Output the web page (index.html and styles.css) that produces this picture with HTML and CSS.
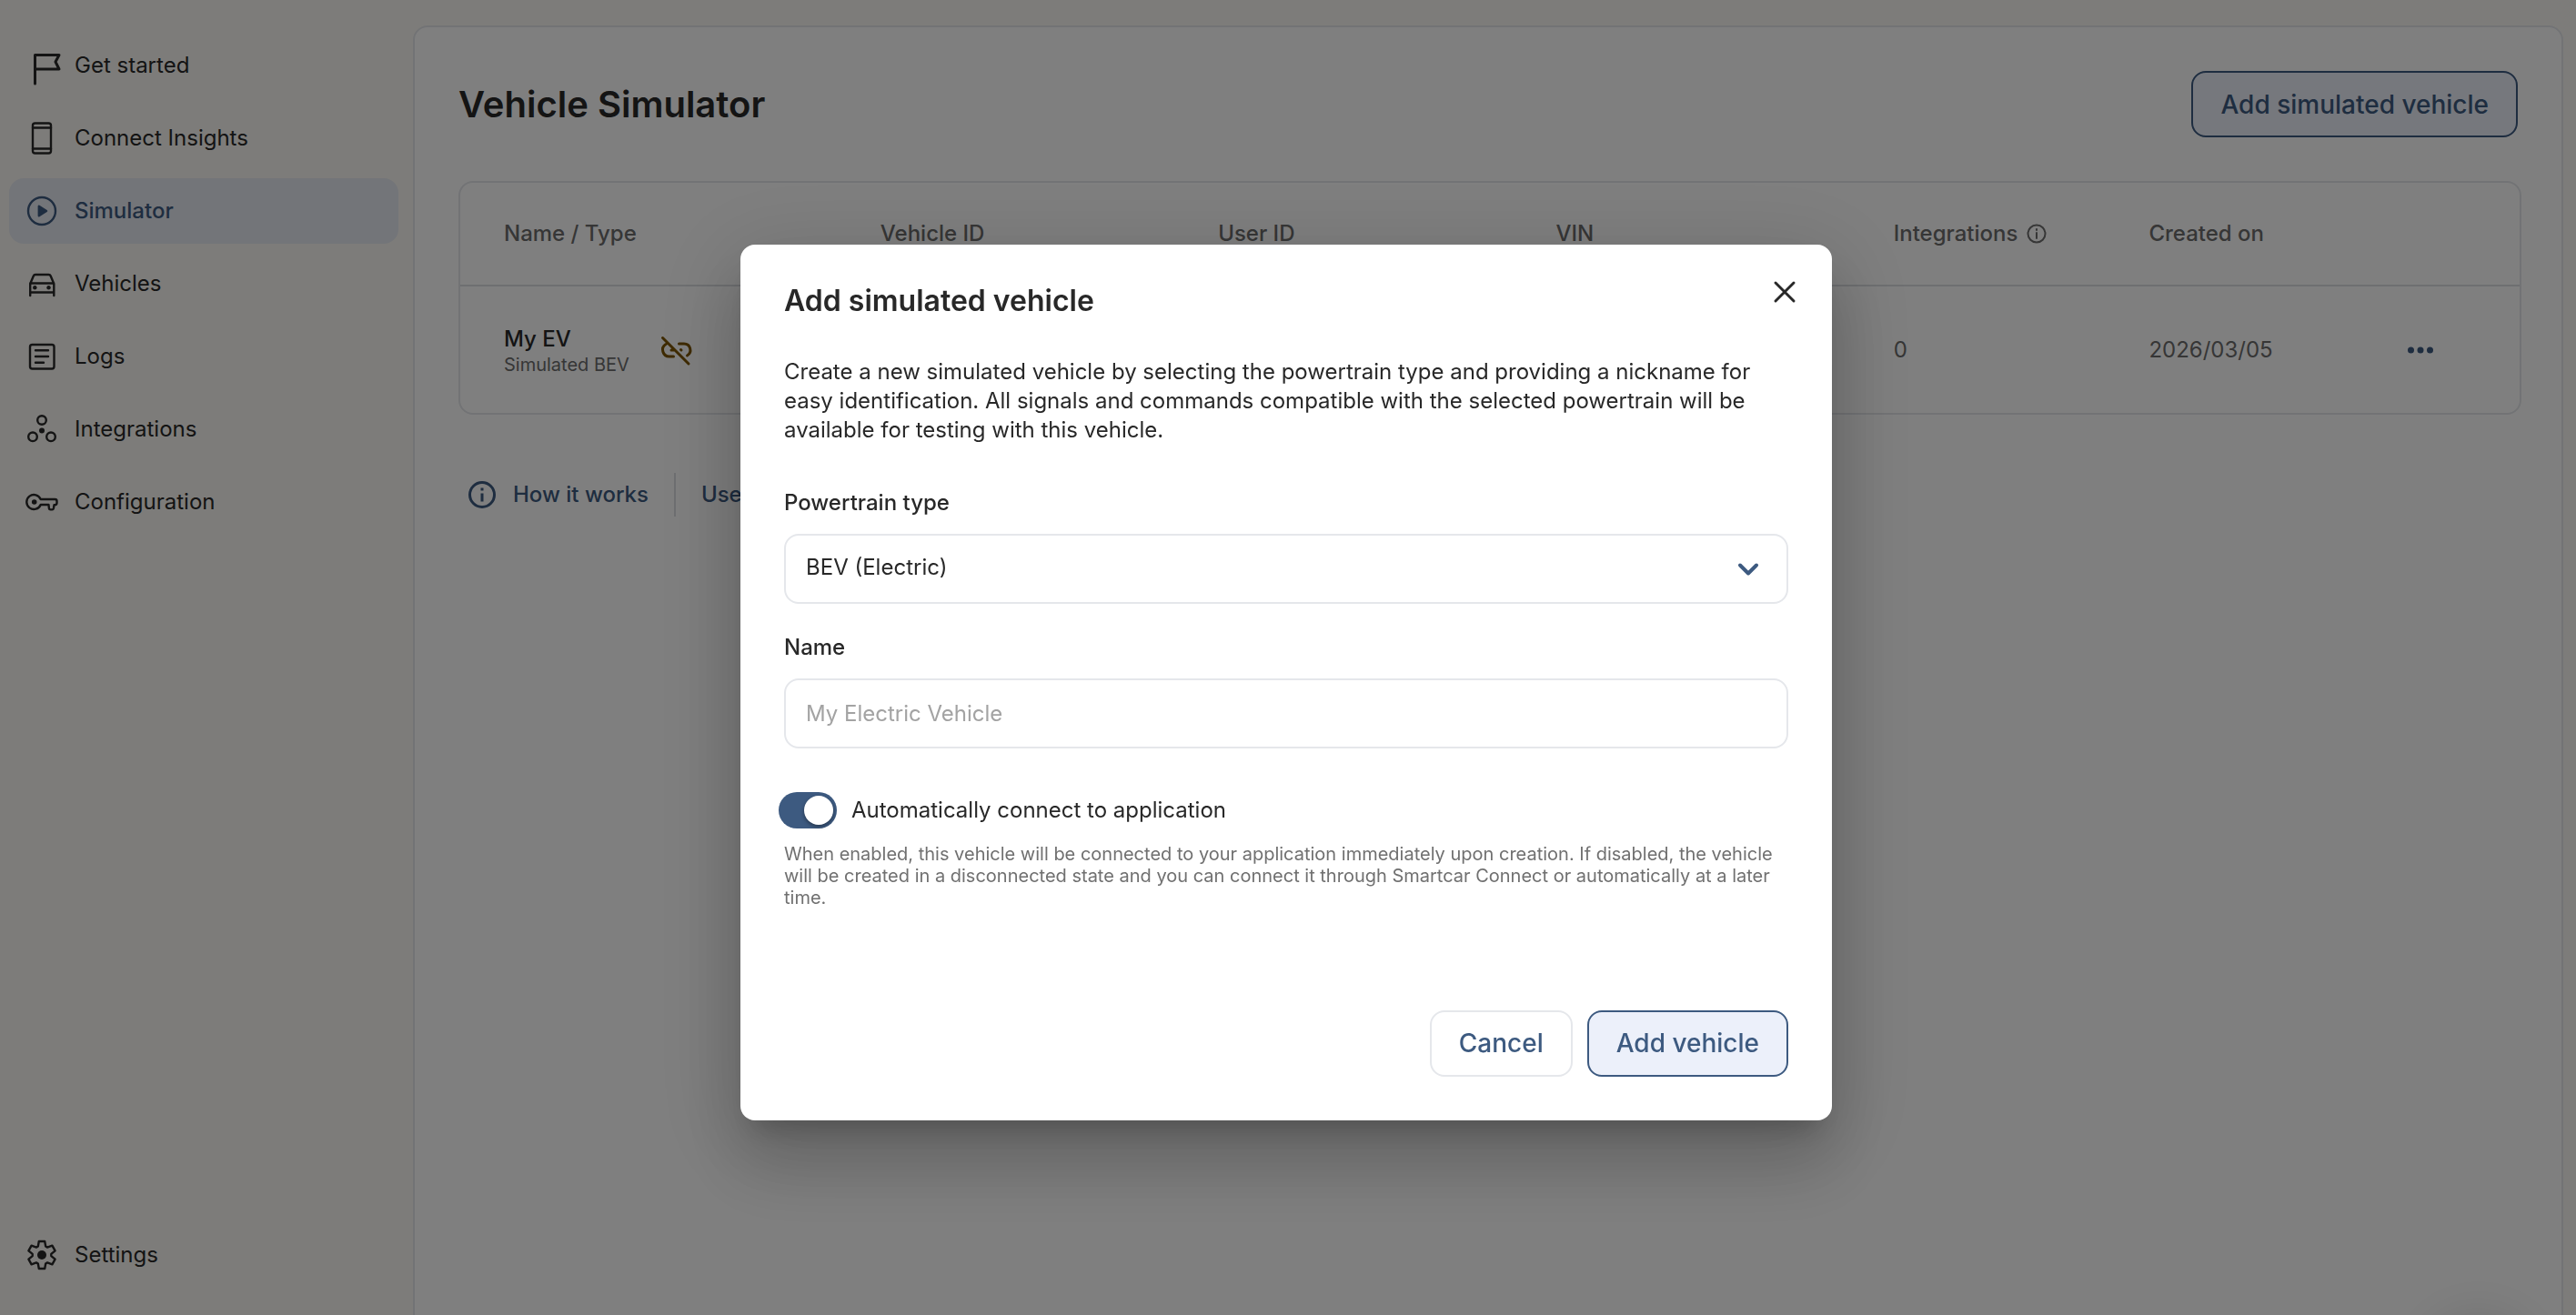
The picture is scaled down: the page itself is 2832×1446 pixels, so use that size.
FILE: index.html
```html
<!DOCTYPE html>
<html lang="en">
<head>
    <meta charset="UTF-8">
    <meta name="viewport" content="width=device-width, initial-scale=1.0">
    <title>Vehicle Simulator</title>
    <link rel="stylesheet" href="styles.css">
</head>
<body>
    <div class="app">
        <nav class="sidebar">
            <a class="nav-item" href="#">
                <svg class="icon icon-bold" viewBox="0 0 36 36"><path d="M10.500 38V6.500H37L33 14l4 8H10.500"/></svg>
                Get started
            </a>
            <a class="nav-item" href="#">
                <svg class="icon" viewBox="0 0 36 36"><rect x="8" y="1.500" width="20" height="33" rx="2.500"/><path d="M8 6.500h20M8 29.500h20"/></svg>
                Connect Insights
            </a>
            <a class="nav-item active" href="#">
                <svg class="icon" viewBox="0 0 36 36"><circle cx="18" cy="18" r="15"/><path class="solid" d="M14.800 12.800v10.400L23 18z"/></svg>
                Simulator
            </a>
            <a class="nav-item" href="#">
                <svg class="icon" viewBox="0 0 36 36"><path d="M5.200 31V18L8.800 9.500Q9.400 8 11 8h14.500q1.600 0 2.200 1.500L31.300 18v13M5.200 17.500h26M5.200 27.500h26"/><circle class="dot" cx="10.300" cy="22.300" r="2.200"/><circle class="dot" cx="25.500" cy="22.300" r="2.200"/></svg>
                Vehicles
            </a>
            <a class="nav-item" href="#">
                <svg class="icon" viewBox="0 0 36 36"><rect x="5" y="5" width="26.500" height="26.500" rx="2.500"/><path d="M11 11.200h14M11 18h14M11 24.800h9"/></svg>
                Logs
            </a>
            <a class="nav-item" href="#">
                <svg class="icon" viewBox="0 0 36 36"><circle cx="18" cy="8" r="4.800"/><circle cx="8" cy="26.300" r="4.800"/><circle cx="28" cy="26.300" r="4.800"/><circle class="dot" cx="18" cy="19.500" r="3"/></svg>
                Integrations
            </a>
            <a class="nav-item" href="#">
                <svg class="icon" viewBox="0 0 36 36"><path d="M16.700 15H32.500q2 0 2 2v2q0 2-2 2.200h-1l-.6 3.800q-.3 1.400-1.600 1.400h-1.800q-1.400 0-1.600-1.400L25.500 21h-8.800a8 8 0 1 1 0-6z"/><circle class="dot" cx="9.700" cy="18" r="2.800"/></svg>
                Configuration
            </a>
            <a class="nav-item nav-settings" href="#">
                <svg class="icon" viewBox="0 0 36 36"><path d="M13.800 8.500 14.800 3h6.400l1 5.500 1.900 1.100 5.300-1.900 3.200 5.600-4.300 3.600v2.200l4.300 3.600-3.200 5.600-5.300-1.900-1.900 1.100-1 5.500h-6.400l-1-5.500-1.900-1.100-5.300 1.900-3.200-5.600 4.300-3.600v-2.200l-4.300-3.600 3.200-5.600 5.300 1.900z"/><circle class="dot" cx="18" cy="18" r="5"/></svg>
                Settings
            </a>
        </nav>

        <main class="panel">
            <header class="panel-header">
                <h1>Vehicle Simulator</h1>
                <button class="btn btn-primary" type="button">Add simulated vehicle</button>
            </header>

            <div class="table-card">
                <table>
                    <colgroup>
                        <col class="col-name">
                        <col class="col-id">
                        <col class="col-id">
                        <col class="col-id">
                        <col class="col-meta">
                        <col class="col-meta">
                        <col>
                    </colgroup>
                    <thead>
                        <tr>
                            <th>Name / Type</th>
                            <th>Vehicle ID</th>
                            <th>User ID</th>
                            <th>VIN</th>
                            <th>
                                <span class="th-info">Integrations
                                    <svg class="icon-small" viewBox="0 0 22 22"><circle cx="11" cy="11" r="9.500"/><path d="M11 10v6M11 6v1"/></svg>
                                </span>
                            </th>
                            <th>Created on</th>
                            <th></th>
                        </tr>
                    </thead>
                    <tbody>
                        <tr>
                            <td>
                                <div class="vehicle">
                                    <div>
                                        <div class="vehicle-name">My EV</div>
                                        <div class="vehicle-type">Simulated BEV</div>
                                    </div>
                                    <svg class="icon icon-bold unlinked" viewBox="0 0 36 36"><path d="M2.500 4.500 31 33M14.500 25H10A7.300 7.300 0 0 1 6 11.500M20.500 11H26a7 7 0 0 1 3.500 13M12 18h3.500M22.500 17.500l.5.500"/></svg>
                                </div>
                            </td>
                            <td></td>
                            <td></td>
                            <td></td>
                            <td>0</td>
                            <td>2026/03/05</td>
                            <td>
                                <button class="more" type="button" aria-label="More">
                                    <svg class="icon" viewBox="0 0 36 36"><circle class="dot" cx="7.500" cy="18" r="3.500"/><circle class="dot" cx="18" cy="18" r="3.500"/><circle class="dot" cx="28.500" cy="18" r="3.500"/></svg>
                                </button>
                            </td>
                        </tr>
                    </tbody>
                </table>
            </div>

            <div class="help-links">
                <a href="#">
                    <svg class="icon icon-bold" viewBox="0 0 36 36"><circle cx="18" cy="18" r="13.500"/><path d="M18 16.500v9M18 10.500v3" stroke-linecap="butt"/></svg>
                    How it works
                </a>
                <a href="#">Use</a>
            </div>
        </main>
    </div>

    <div class="chat-launcher"></div>

    <div class="overlay">
        <form class="modal" role="dialog" aria-labelledby="modalTitle">
            <div class="modal-header">
                <h2 id="modalTitle">Add simulated vehicle</h2>
                <button class="close" type="button" aria-label="Close">
                    <svg viewBox="0 0 24 24"><path d="M2 2l20 20M22 2L2 22"/></svg>
                </button>
            </div>
            <p class="modal-text">Create a new simulated vehicle by selecting the powertrain type and providing a nickname for easy identification. All signals and commands compatible with the selected powertrain will be available for testing with this vehicle.</p>

            <div class="fields">
                <div class="field">
                    <label for="powertrain">Powertrain type</label>
                    <div class="select-wrap">
                        <select id="powertrain">
                            <option>BEV (Electric)</option>
                        </select>
                        <svg class="chevron" viewBox="0 0 24 24"><path d="M3 7.500l9 9 9-9"/></svg>
                    </div>
                </div>
                <div class="field">
                    <label for="name">Name</label>
                    <input id="name" type="text" placeholder="My Electric Vehicle">
                </div>
            </div>

            <div class="switch-row">
                <input class="switch" id="autoConnect" type="checkbox" checked>
                <label for="autoConnect">Automatically connect to application</label>
            </div>
            <p class="hint">When enabled, this vehicle will be connected to your application immediately upon creation. If disabled, the vehicle will be created in a disconnected state and you can connect it through Smartcar Connect or automatically at a later time.</p>

            <div class="modal-actions">
                <button class="btn" type="button">Cancel</button>
                <button class="btn btn-primary" type="submit">Add vehicle</button>
            </div>
        </form>
    </div>
</body>
</html>
```

FILE: styles.css
```css
* {
    margin: 0;
    padding: 0;
    box-sizing: border-box;
}

body {
    font-family: Inter, 'Open Sans', sans-serif;
    font-size: 24px;
    line-height: 32px;
    color: #282828;
    background: #fbf9f4;
    overflow: hidden;
}

a {
    color: inherit;
    text-decoration: none;
}

button,
input,
select {
    font: inherit;
    color: inherit;
}

svg {
    display: block;
    fill: none;
    stroke: currentColor;
    stroke-linecap: round;
    stroke-linejoin: round;
    overflow: visible;
    flex-shrink: 0;
}

.icon {
    width: 36px;
    height: 36px;
    stroke-width: 2.4;
}

.icon-bold {
    stroke-width: 3;
}

.icon .dot,
.icon .solid {
    fill: currentColor;
}

.icon .dot {
    stroke: none;
}

.app {
    display: flex;
    height: 100vh;
}

/* Sidebar */
.sidebar {
    width: 454px;
    flex-shrink: 0;
    display: flex;
    flex-direction: column;
    gap: 8px;
    padding: 36px 16px 30px 10px;
}

.nav-item {
    display: flex;
    align-items: center;
    gap: 18px;
    height: 72px;
    padding: 0 18px;
    border-radius: 16px;
}

.nav-item.active {
    background: #e7eaf2;
    color: #3d5a80;
    font-weight: 500;
}

.nav-settings {
    margin-top: auto;
}

/* Main panel, runs on below the fold */
.panel {
    flex: 1;
    margin: 28px 14px -32px 0;
    padding: 48px 44px 48px 48px;
    background: #fff;
    border: 2px solid #e5e7eb;
    border-radius: 16px;
}

.panel-header {
    display: flex;
    justify-content: space-between;
    align-items: center;
    padding-right: 4px;
    margin-bottom: 48px;
}

h1 {
    font-size: 40px;
    line-height: 48px;
    font-weight: 600;
}

.btn {
    height: 73px;
    padding: 0 30px;
    font-size: 28px;
    font-weight: 500;
    color: #3d5a80;
    background: #fff;
    border: 2px solid #e5e7eb;
    border-radius: 16px;
}

.btn-primary {
    background: #ecf0fa;
    border-color: #3d5a80;
}

.table-card {
    border: 2px solid #e5e7eb;
    border-radius: 16px;
}

table {
    width: 100%;
    table-layout: fixed;
    border-collapse: collapse;
}

.col-name {
    width: 20.4%;
}

.col-id {
    width: 16.4%;
}

.col-meta {
    width: 12.4%;
}

th,
td {
    text-align: left;
    color: #6c6c6c;
}

th:first-child,
td:first-child {
    padding-left: 48px;
}

th {
    height: 113px;
    font-weight: 500;
    border-bottom: 2px solid #dcdee2;
}

td {
    height: 140px;
}

.th-info {
    display: flex;
    align-items: center;
    gap: 10px;
}

.icon-small {
    width: 22px;
    height: 22px;
    stroke-width: 2;
}

.vehicle {
    display: flex;
    align-items: center;
    gap: 34px;
}

.vehicle-name {
    color: #282828;
    font-weight: 500;
}

.vehicle-type {
    font-size: 20px;
    line-height: 24px;
}

.unlinked {
    color: #7d5500;
}

.more {
    display: block;
    border: none;
    background: none;
    color: #3d5a80;
}

.help-links {
    display: flex;
    margin-top: 64px;
    color: #3d5a80;
    font-weight: 500;
}

.help-links a {
    display: flex;
    align-items: center;
    gap: 16px;
    height: 48px;
    padding: 0 28px;
}

.help-links a:first-child {
    padding-left: 8px;
    border-right: 2px solid #dcdee2;
}

/* Chat bubble sits just below the window edge */
.chat-launcher {
    position: fixed;
    right: 59px;
    bottom: -104px;
    width: 96px;
    height: 96px;
    border-radius: 50%;
    box-shadow: 0 2px 64px rgba(0, 0, 0, 0.2);
}

/* Modal */
.overlay {
    position: fixed;
    inset: 0;
    display: flex;
    align-items: center;
    justify-content: center;
    padding: 54px 4px 0 0;
    background: rgba(0, 0, 0, 0.5);
}

.modal {
    width: 1200px;
    max-width: 100%;
    padding: 40px 48px 48px;
    background: #fff;
    border-radius: 16px;
    box-shadow: 0 22px 30px -14px rgba(0, 0, 0, 0.2),
        0 48px 76px 6px rgba(0, 0, 0, 0.14),
        0 18px 92px 16px rgba(0, 0, 0, 0.12);
}

.modal-header {
    display: flex;
    justify-content: space-between;
    align-items: flex-start;
    margin: 0 -8px 40px 0;
}

h2 {
    font-size: 32px;
    line-height: 44px;
    font-weight: 600;
}

.close {
    width: 24px;
    height: 24px;
    border: none;
    background: none;
}

.close svg {
    stroke-width: 3;
}

.modal-text {
    margin-bottom: 48px;
}

.fields {
    display: flex;
    flex-direction: column;
    gap: 32px;
}

.field label {
    display: block;
    margin-bottom: 18px;
    font-weight: 500;
}

.field input,
.field select {
    display: block;
    width: 100%;
    height: 77px;
    padding: 0 22px;
    background: #fff;
    border: 2px solid #e5e7eb;
    border-radius: 16px;
    appearance: none;
}

.field select {
    padding-bottom: 2px;
}

.field input::placeholder {
    color: #a3a3a3;
}

.select-wrap {
    position: relative;
}

.chevron {
    position: absolute;
    right: 32px;
    top: 27px;
    width: 24px;
    height: 24px;
    color: #3d5a80;
    stroke-width: 4;
    pointer-events: none;
}

.switch-row {
    display: flex;
    align-items: center;
    gap: 16px;
    margin: 48px 0 16px -6px;
}

.switch {
    width: 64px;
    height: 40px;
    padding: 4px;
    background: #d4d4d4;
    border-radius: 20px;
    appearance: none;
}

.switch::before {
    content: "";
    display: block;
    width: 32px;
    height: 32px;
    background: #fff;
    border-radius: 50%;
    box-shadow: 0 2px 4px rgba(0, 0, 0, 0.4);
}

.switch:checked {
    background: #3d5a80;
}

.switch:checked::before {
    margin-left: auto;
}

.hint {
    font-size: 20px;
    line-height: 24px;
    color: #707070;
}

.modal-actions {
    display: flex;
    justify-content: flex-end;
    gap: 16px;
    margin-top: 112px;
}
```
